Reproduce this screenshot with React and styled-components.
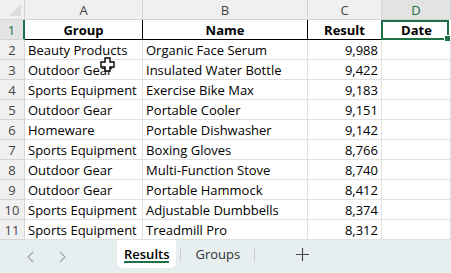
import React from "react";
import styled, { createGlobalStyle } from "styled-components";

const rows = [
  ["Beauty Products", "Organic Face Serum", "9,988"],
  ["Outdoor Gear", "Insulated Water Bottle", "9,422"],
  ["Sports Equipment", "Exercise Bike Max", "9,183"],
  ["Outdoor Gear", "Portable Cooler", "9,151"],
  ["Homeware", "Portable Dishwasher", "9,142"],
  ["Sports Equipment", "Boxing Gloves", "8,766"],
  ["Outdoor Gear", "Multi-Function Stove", "8,740"],
  ["Outdoor Gear", "Portable Hammock", "8,412"],
  ["Sports Equipment", "Adjustable Dumbbells", "8,374"],
  ["Sports Equipment", "Treadmill Pro", "8,312"],
];

const Global = createGlobalStyle`
  html, body { margin: 0; padding: 0; background: #fff; }
  body { font-family: "Open Sans", "Noto Sans", sans-serif; }
`;

const Page = styled.div`
  width: 451px;
  height: 273px;
  display: flex;
  flex-direction: column;
  overflow: hidden;
  position: relative;
`;

const Grid = styled.div`
  display: grid;
  grid-template-columns: 25px 118px 165px 74px 69px;
  grid-auto-rows: 20px;
  height: 240px;
`;

const Corner = styled.div`
  background: #f0f0f0;
  border-right: 1px solid #d4d4d4;
  border-bottom: 1px solid #d4d4d4;
  position: relative;
  &::after {
    content: "";
    position: absolute;
    right: 3px;
    bottom: 3px;
    border-left: 12px solid transparent;
    border-bottom: 12px solid #dcdcdc;
  }
`;

const ColHead = styled.div`
  color: ${(p) => (p.$active ? "#1e6e42" : "#444")};
  font-size: 13px;
  display: flex;
  align-items: center;
  justify-content: center;
  border-right: 1px solid #d4d4d4;
  border-bottom: 1px solid #d4d4d4;
  background: ${(p) => (p.$active ? "#e3e3e3" : "#f0f0f0")};
  box-sizing: border-box;
`;

const RowHead = styled.div`
  background: ${(p) => (p.$active ? "#e3e3e3" : "#f0f0f0")};
  color: ${(p) => (p.$active ? "#1e6e42" : "#444")};
  font-size: 13px;
  display: flex;
  align-items: center;
  justify-content: center;
  border-right: ${(p) => (p.$active ? "2px solid #1e7145" : "1px solid #d4d4d4")};
  border-bottom: 1px solid #d4d4d4;
  box-sizing: border-box;
`;

const Cell = styled.div`
  font-size: 13px;
  color: #000;
  padding: 0 3px;
  display: flex;
  align-items: center;
  justify-content: ${(p) => (p.$align === "right" ? "flex-end" : p.$align === "center" ? "center" : "flex-start")};
  font-weight: ${(p) => (p.$bold ? 700 : 400)};
  white-space: nowrap;
  overflow: ${(p) => (p.$sel ? "visible" : "hidden")};
  box-sizing: border-box;
  border-right: ${(p) => (p.$sel ? "none" : `1px solid ${p.$head ? "#000" : "#e1e1e1"}`)};
  border-bottom: 1px solid ${(p) => (p.$head ? "#000" : "#e1e1e1")};
  position: relative;
`;

const Selected = styled.div`
  position: absolute;
  left: -1px;
  top: 0;
  width: 68px;
  height: 20px;
  box-sizing: border-box;
  border: 2px solid #1e7145;
  pointer-events: none;
  &::after {
    content: "";
    position: absolute;
    right: -4px;
    bottom: -4px;
    width: 5px;
    height: 5px;
    background: #1e7145;
    border: 1px solid #fff;
  }
`;

const Cursor = styled.svg`
  position: absolute;
  left: 100px;
  top: 57px;
`;

const TabBar = styled.div`
  flex: 1;
  background: #e6eef0;
  display: flex;
  align-items: stretch;
`;

const Nav = styled.div`
  width: 117px;
  display: flex;
  align-items: center;
  padding-left: 26px;
  gap: 21px;
  box-sizing: border-box;
`;

const Tab = styled.div`
  font-size: 13px;
  color: ${(p) => (p.$active ? "#000" : "#333")};
  font-weight: ${(p) => (p.$active ? 600 : 400)};
  background: ${(p) => (p.$active ? "#fff" : "transparent")};
  border-radius: 0 0 5px 5px;
  margin-bottom: 5px;
  padding: 0 ${(p) => (p.$active ? "7px" : "14px")};
  display: flex;
  align-items: center;
  justify-content: center;
  position: relative;
  &::after {
    content: "";
    display: ${(p) => (p.$active ? "block" : "none")};
    position: absolute;
    left: 7px;
    right: 7px;
    bottom: 5px;
    height: 2px;
    background: #1e7145;
  }
`;

const Sep = styled.div`
  width: 1px;
  background: #c8cdce;
  margin: 8px 0 12px;
  margin-left: ${(p) => p.$ml || 0}px;
`;

const Plus = styled.div`
  display: flex;
  align-items: center;
  margin-left: 41px;
  margin-bottom: 5px;
`;

export default function App() {
  return (
    <Page>
      <Global />
      <Grid>
        <Corner />
        <ColHead>A</ColHead>
        <ColHead>B</ColHead>
        <ColHead>C</ColHead>
        <ColHead $active>D</ColHead>
        <RowHead $active>1</RowHead>
        <Cell $head $bold $align="center">Group</Cell>
        <Cell $head $bold $align="center">Name</Cell>
        <Cell $head $bold $align="center">Result</Cell>
        <Cell $sel $bold $align="center">
          Date
          <Selected />
        </Cell>
        {rows.map((r, i) => (
          <React.Fragment key={i}>
            <RowHead>{i + 2}</RowHead>
            <Cell>{r[0]}</Cell>
            <Cell>{r[1]}</Cell>
            <Cell $align="right">{r[2]}</Cell>
            <Cell />
          </React.Fragment>
        ))}
      </Grid>
      <Cursor width="15" height="15" viewBox="0 0 15 15">
        <path d="M5 1h5v4h4v5h-4v4H5v-4H1V5h4z" fill="#fff" stroke="#000" strokeWidth="1.4" />
      </Cursor>
      <TabBar>
        <Nav>
          <svg width="10" height="12" viewBox="0 0 10 12">
            <path d="M7 1L2 6l5 5" fill="none" stroke="#a0a6a8" strokeWidth="1.2" />
          </svg>
          <svg width="10" height="12" viewBox="0 0 10 12">
            <path d="M3 1l5 5-5 5" fill="none" stroke="#a0a6a8" strokeWidth="1.2" />
          </svg>
        </Nav>
        <Tab $active>Results</Tab>
        <Sep $ml={4} />
        <Tab>Groups</Tab>
        <Sep />
        <Plus>
          <svg width="13" height="13" viewBox="0 0 13 13">
            <path d="M6.5 0v13M0 6.5h13" stroke="#444" strokeWidth="1.1" />
          </svg>
        </Plus>
      </TabBar>
    </Page>
  );
}
